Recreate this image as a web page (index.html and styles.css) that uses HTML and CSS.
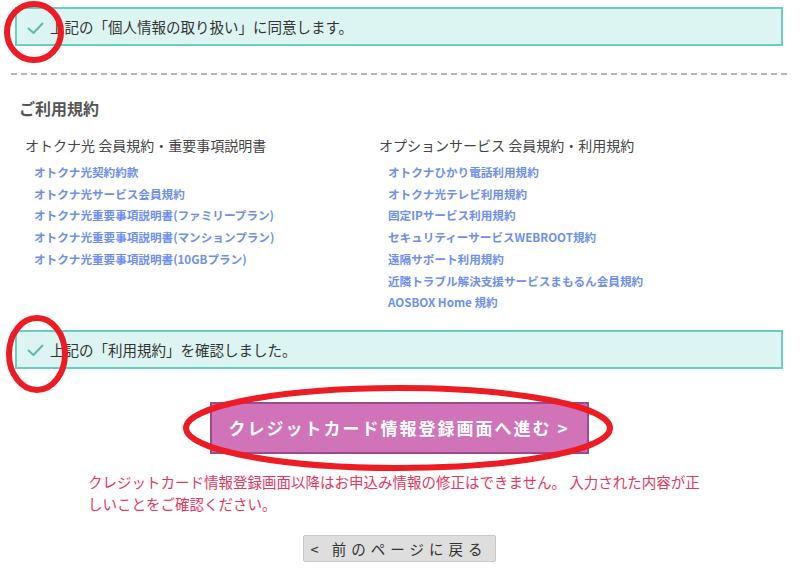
FILE: index.html
```html
<!DOCTYPE html>
<html lang="ja">
<head>
  <meta charset="UTF-8" />
  <title>お申込み内容の確認</title>
  <link rel="stylesheet" href="styles.css">
</head>
<body>

<div class="page">
  <!-- 個人情報の同意 -->
  <label class="agree">
    <svg class="check" viewBox="0 0 17 12" width="17" height="12"><path d="M1 6 L6.5 11 L16 1" fill="none" stroke="#5fb8a8" stroke-width="2"/></svg>
    <span>上記の「個人情報の取り扱い」に同意します。</span>
  </label>

  <hr class="divider">

  <!-- 利用規約 -->
  <h2 class="terms-title">ご利用規約</h2>
  <div class="terms">
    <div class="terms-col">
      <h3>オトクナ光 会員規約・重要事項説明書</h3>
      <ul>
        <li><a href="#">オトクナ光契約約款</a></li>
        <li><a href="#">オトクナ光サービス会員規約</a></li>
        <li><a href="#">オトクナ光重要事項説明書(ファミリープラン)</a></li>
        <li><a href="#">オトクナ光重要事項説明書(マンションプラン)</a></li>
        <li><a href="#">オトクナ光重要事項説明書(10GBプラン)</a></li>
      </ul>
    </div>
    <div class="terms-col">
      <h3>オプションサービス 会員規約・利用規約</h3>
      <ul>
        <li><a href="#">オトクナひかり電話利用規約</a></li>
        <li><a href="#">オトクナ光テレビ利用規約</a></li>
        <li><a href="#">固定IPサービス利用規約</a></li>
        <li><a href="#">セキュリティーサービスWEBROOT規約</a></li>
        <li><a href="#">遠隔サポート利用規約</a></li>
        <li><a href="#">近隣トラブル解決支援サービスまもるん会員規約</a></li>
        <li><a href="#">AOSBOX Home 規約</a></li>
      </ul>
    </div>
  </div>

  <label class="agree agree-terms">
    <svg class="check" viewBox="0 0 17 12" width="17" height="12"><path d="M1 6 L6.5 11 L16 1" fill="none" stroke="#5fb8a8" stroke-width="2"/></svg>
    <span>上記の「利用規約」を確認しました。</span>
  </label>

  <div class="actions">
    <button class="next-button">クレジットカード情報登録画面へ進む &gt;</button>
    <p class="notice">クレジットカード情報登録画面以降はお申込み情報の修正はできません。 入力された内容が正しいことをご確認ください。</p>
    <button class="back-button">&lt; 前のページに戻る</button>
  </div>

  <!-- 赤丸の注釈 -->
  <svg class="marks" width="801" height="581" viewBox="0 0 801 581">
    <ellipse cx="34" cy="32" rx="27" ry="28" />
    <ellipse cx="37" cy="354" rx="28" ry="36" />
    <ellipse cx="398" cy="428" rx="212" ry="40" />
  </svg>
</div>

</body>
</html>
```

FILE: styles.css
```css
* {
  box-sizing: border-box;
  margin: 0;
  padding: 0;
}

body {
  font-family: "Noto Sans CJK JP", "Noto Sans", sans-serif;
  color: #333;
  background: #fff;
  width: 801px;
  height: 581px;
  overflow: hidden;
}

.page {
  position: relative;
  padding: 7px 18px 0 15px;
}

.agree {
  display: flex;
  align-items: center;
  height: 39px;
  background-color: #dcf5f2;
  border: 2px solid #66cfc0;
  font-size: 14.5px;
}

.check {
  margin-left: 10px;
  margin-right: 6px;
  margin-top: 2px;
  flex-shrink: 0;
}

.divider {
  border: none;
  border-top: 2px dashed #b5b5b5;
  margin: 27px -4px 0 -4px;
}

.terms-title {
  font-size: 16px;
  font-weight: bold;
  color: #555;
  line-height: 24px;
  margin: 21px 0 0 4px;
}

.terms {
  display: flex;
  padding-left: 10px;
  margin-top: 15px;
}

.terms-col {
  width: 354px;
}

.terms-col h3 {
  font-size: 14px;
  font-weight: normal;
  color: #444;
  line-height: 20px;
  margin-bottom: 7px;
}

.terms-col ul {
  list-style: none;
  padding-left: 9px;
}

.terms-col li {
  line-height: 21.7px;
  font-size: 11.6px;
}

.terms-col a {
  color: #6e8ff0;
  font-weight: bold;
  text-decoration: none;
}

.agree-terms {
  margin-top: 16px;
}

.actions {
  display: flex;
  flex-direction: column;
  align-items: center;
}

.next-button {
  margin-top: 33px;
  width: 379px;
  height: 52px;
  background-color: #d073b8;
  border: 2px solid #9c4b8c;
  color: #fff;
  font-family: inherit;
  font-size: 17px;
  font-weight: bold;
  letter-spacing: 2px;
  cursor: pointer;
}

.notice {
  align-self: flex-start;
  margin: 17px 0 0 73px;
  width: 612px;
  font-size: 14.5px;
  line-height: 22px;
  color: #e8365d;
}

.back-button {
  margin-top: 20px;
  width: 193px;
  height: 27px;
  background-color: #dedede;
  border: 1px solid #c8c8c8;
  border-radius: 2px;
  font-family: inherit;
  font-size: 14.5px;
  letter-spacing: 5px;
  color: #333;
  cursor: pointer;
}

/* 注釈の赤丸 */
.marks {
  position: absolute;
  top: 0;
  left: 0;
  pointer-events: none;
}

.marks ellipse {
  fill: none;
  stroke: #ed1c24;
  stroke-width: 6;
}
```
